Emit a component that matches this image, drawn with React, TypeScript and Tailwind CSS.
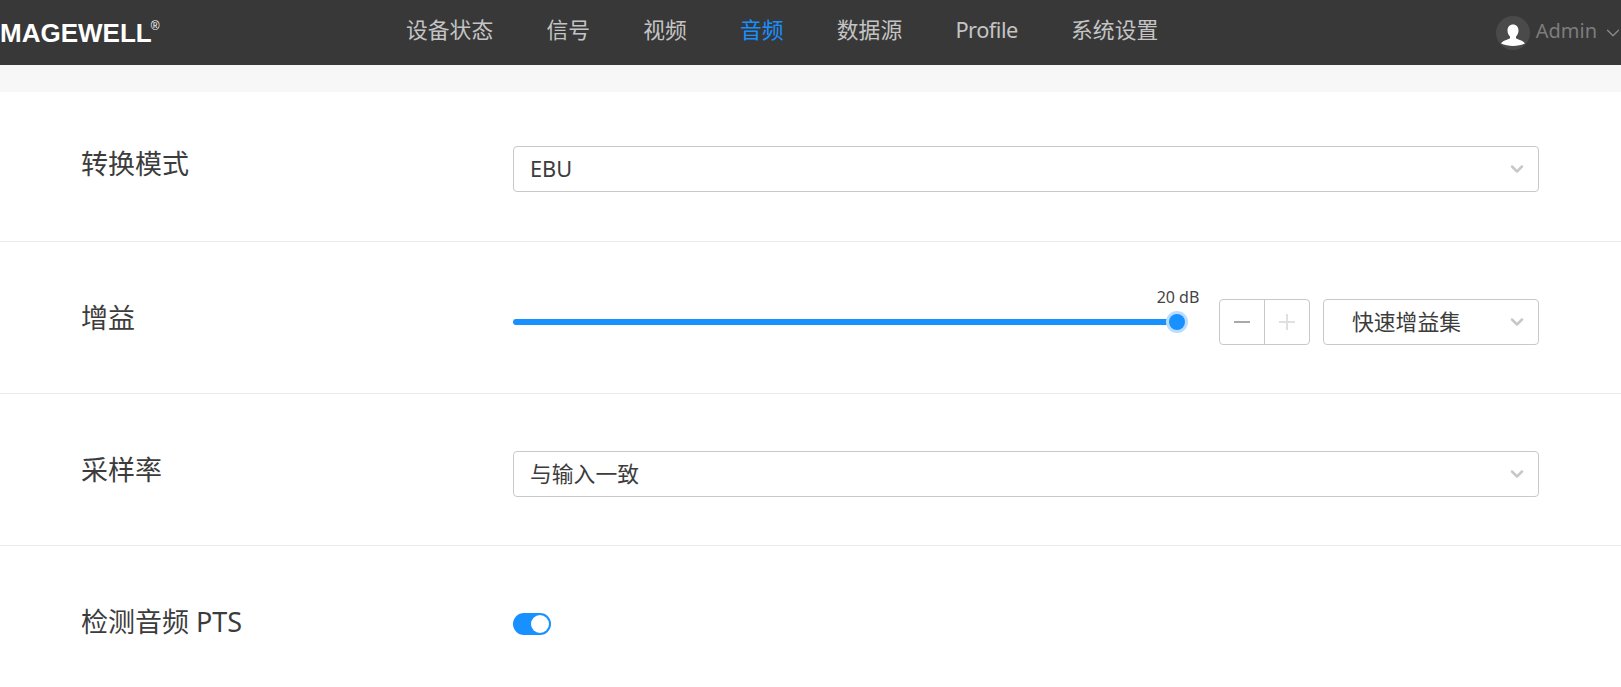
import { ChevronDown } from "lucide-react";

const nav = ["设备状态", "信号", "视频", "音频", "数据源", "Profile", "系统设置"];

function Select({ text, className }: { text: string; className: string }) {
  return (
    <div className={`flex h-[46px] items-center justify-between rounded-[4px] border border-[#c9c9c9] bg-white pr-[11px] text-[#3c3c3c] ${className}`}>
      <span className="pb-[1px] text-[21.8px] leading-none">{text}</span>
      <ChevronDown size={20} strokeWidth={3} className="text-[#c8c8c8]" />
    </div>
  );
}

function Row({ label, className, children }: { label: string; className: string; children: React.ReactNode }) {
  return (
    <section className={`flex border-b border-[#ececec] pl-[81px] pr-[82px] ${className}`}>
      <div className="w-[432px] shrink-0 text-[27px] leading-[36px] text-[#3c3c3c]">{label}</div>
      <div className="flex-1">{children}</div>
    </section>
  );
}

export default function App() {
  return (
    <div className="h-[687px] overflow-hidden bg-white font-['Noto_Sans','Noto_Sans_CJK_SC',sans-serif]">
      {/* Top bar */}
      <header className="flex h-[65px] items-center bg-[#383838]">
        <div className="flex w-[406px] shrink-0 items-start font-['Liberation_Sans',sans-serif] text-white">
          <span className="text-[26px] leading-none font-bold">MAGEWELL</span>
          <span className="ml-[-1px] text-[12px] leading-none">®</span>
        </div>
        <nav className="flex flex-1 items-center gap-[53.200px] pb-[4px] text-[21.8px] text-[#c4c4c4]">
          {nav.map((item) => (
            <span
              key={item}
              className={item === "音频" ? "text-[#1890ff]" : item === "Profile" ? "tracking-[-0.5px]" : ""}
            >
              {item}
            </span>
          ))}
        </nav>
        <div className="flex items-center">
          <div className="h-[34px] w-[34px] rounded-full bg-[#4a4a4a]">
            <svg viewBox="0 0 34 34" className="h-[34px] w-[34px]" fill="#fff">
              <path d="M17 8.500c3.200 0 5.500 2.300 5.500 6 0 2.600-1.200 5-2.500 6v1.800c2 1.200 7 2.200 9 5.200-3 1.500-8 2.500-12 2.500s-9-1-12-2.500c2-3 7-4 9-5.200v-1.800c-1.300-1-2.500-3.400-2.500-6 0-3.700 2.300-6 5.500-6z" />
            </svg>
          </div>
          <span className="ml-[6px] pb-[4px] text-[20px] text-[#7d7d7d]">Admin</span>
          <ChevronDown size={22} strokeWidth={1.400} className="ml-[5px] mr-[-3px] text-[#8a8a8a]" />
        </div>
      </header>

      <div className="h-[27px] bg-[#f7f7f7]" />

      <main>
        <Row label="转换模式" className="h-[150px] pt-[54px]">
          <Select text="EBU" className="pl-[16px]" />
        </Row>

        <Row label="增益" className="h-[152px] pt-[58px]">
          <div className="mt-[-1px] flex items-center">
            <div className="relative h-[6px] w-[664px] rounded-full bg-[#1890ff]">
              <span className="absolute right-[-41px] top-[-32px] w-[80px] text-center text-[16px] leading-5 text-[#444]">20 dB</span>
              <span className="absolute right-[-8px] top-[-5px] h-4 w-4 rounded-full bg-[#1890ff] shadow-[0_0_0_3px_#badcff]" />
            </div>
            <div className="ml-[42px] flex h-[46px] w-[91px] items-center rounded-[4px] border border-[#c9c9c9]">
              <div className="flex h-full flex-1 items-center justify-center border-r border-[#c9c9c9]">
                <span className="h-[2px] w-4 bg-[#a9a9a9]" />
              </div>
              <div className="relative flex h-full flex-1 items-center justify-center">
                <span className="h-[2px] w-4 bg-[#e0e0e0]" />
                <span className="absolute h-4 w-[2px] bg-[#e0e0e0]" />
              </div>
            </div>
            <Select text="快速增益集" className="ml-[13px] w-[216px] pl-[28px]" />
          </div>
        </Row>

        <Row label="采样率" className="h-[152px] pt-[58px]">
          <div className="mt-[-1px]">
            <Select text="与输入一致" className="pl-[16px]" />
          </div>
        </Row>

        <Row label="检测音频 PTS" className="h-[152px] border-b-0 pt-[58px]">
          <div className="mt-[9px] flex h-[22px] w-[38px] items-center justify-end rounded-full bg-[#1890ff] pr-[2px]">
            <span className="h-[18px] w-[18px] rounded-full bg-white" />
          </div>
        </Row>
      </main>
    </div>
  );
}
